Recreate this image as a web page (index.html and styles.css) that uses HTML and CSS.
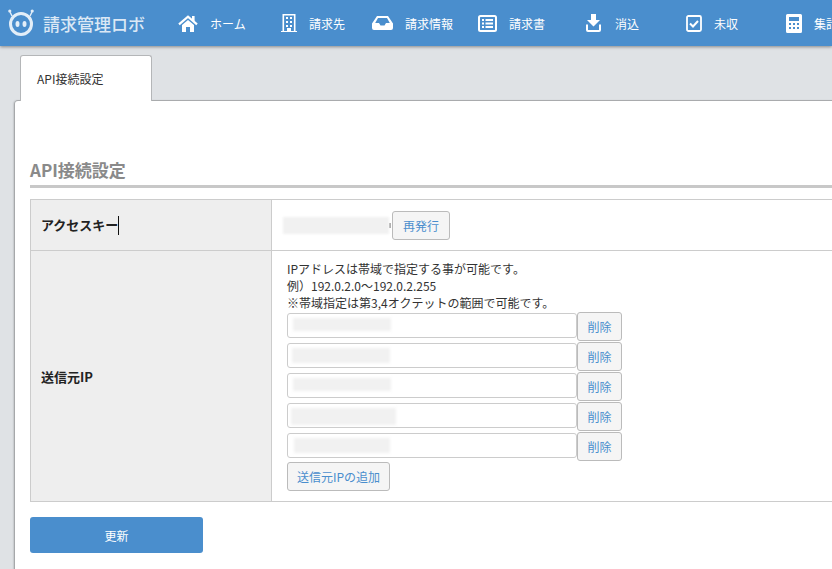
FILE: index.html
```html
<!DOCTYPE html>
<html lang="ja">
<head>
<meta charset="utf-8">
<title>API接続設定</title>
<link rel="stylesheet" href="styles.css">
</head>
<body>
<header class="header">
  <div class="logo">
    <svg class="logo-icon" viewBox="0 0 28 28" width="28" height="28">
      <circle cx="14" cy="16" r="10.5" fill="none" stroke="#e3eef8" stroke-width="3"/>
      <ellipse cx="10.5" cy="16" rx="2" ry="3" fill="#e3eef8"/>
      <ellipse cx="17.5" cy="16" rx="2" ry="3" fill="#e3eef8"/>
      <path d="M5 8 3 4M23 8l2-4" stroke="#e3eef8" stroke-width="1.4"/>
      <circle cx="2.8" cy="3" r="1.6" fill="#e3eef8"/>
      <circle cx="25.2" cy="3" r="1.6" fill="#e3eef8"/>
    </svg>
    <span class="logo-text">請求管理ロボ</span>
  </div>
  <nav class="nav">
    <a class="nav-item w-home">
      <svg class="icon" width="20" height="17" viewBox="0 0 20 17"><path d="M1 9.3 10 1.6l9 7.7" fill="none" stroke="#fff" stroke-width="2.2"/><path d="M14 1h2.6v5H14zM4 10l6-5 6 5v7h-4v-5H8v5H4z" fill="#fff"/></svg>
      <span class="nav-label">ホーム</span>
    </a>
    <a class="nav-item w-client">
      <svg class="icon" width="16" height="18" viewBox="0 0 16 18"><path d="M0 17h16v1H0zM1.5 0h13v17h-1.6V1.6H3.100V17H1.500z" fill="#fff"/><path d="M5 3h2v2H5zM9 3h2v2H9zM5 7h2v2H5zM9 7h2v2H9zM5 11h2v2H5zM9 11h2v2H9zM6 14h4v3H6z" fill="#fff"/></svg>
      <span class="nav-label">請求先</span>
    </a>
    <a class="nav-item w-info">
      <svg class="icon" width="21" height="14" viewBox="0 0 21 14"><path fill-rule="evenodd" d="M5 0h11l5 7.500V12a2 2 0 0 1-2 2H2a2 2 0 0 1-2-2V7.500zM6 2 3.200 7H7l1.500 2.500h4L14 7h3.800L15 2z" fill="#fff"/></svg>
      <span class="nav-label">請求情報</span>
    </a>
    <a class="nav-item w-invoice">
      <svg class="icon" width="19" height="17" viewBox="0 0 19 17"><rect x="1" y="1" width="17" height="15" rx="1.500" fill="none" stroke="#fff" stroke-width="2"/><path d="M4 4h2v2H4zM7.500 4H15v2H7.500zM4 7.500h2v2H4zM7.500 7.500H15v2H7.500zM4 11h2v2H4zM7.500 11H15v2H7.500z" fill="#fff"/></svg>
      <span class="nav-label">請求書</span>
    </a>
    <a class="nav-item w-clear">
      <svg class="icon" width="15" height="18" viewBox="0 0 15 18"><path d="M5 0h5v6h4l-6.500 6.500L1 6h4z" fill="#fff"/><path d="M1 10.500V16a1 1 0 0 0 1 1h11a1 1 0 0 0 1-1v-5.500" fill="none" stroke="#fff" stroke-width="2"/></svg>
      <span class="nav-label">消込</span>
    </a>
    <a class="nav-item w-unpaid">
      <svg class="icon" width="16" height="17" viewBox="0 0 16 17"><rect x="1" y="1" width="14" height="15" rx="1.500" fill="none" stroke="#fff" stroke-width="1.800"/><path d="m4 8.500 3 3 5-5.500" fill="none" stroke="#fff" stroke-width="2"/></svg>
      <span class="nav-label">未収</span>
    </a>
    <a class="nav-item w-total">
      <svg class="icon" width="16" height="19" viewBox="0 0 16 19"><path fill-rule="evenodd" d="M1.500 0h13A1.500 1.500 0 0 1 16 1.500v16a1.500 1.500 0 0 1-1.500 1.500h-13A1.500 1.500 0 0 1 0 17.500v-16A1.500 1.500 0 0 1 1.500 0zM3 3v4h10V3zM3 9v2h2V9zm4 0v2h2V9zm4 0v2h2V9zm-8 4v2h2v-2zm4 0v2h2v-2zm4 0v2h2v-2z" fill="#fff"/></svg>
      <span class="nav-label">集計</span>
    </a>
  </nav>
</header>

<div class="tabs">
  <div class="tab">API接続設定</div>
</div>

<main class="card">
  <h2 class="title">API接続設定</h2>
  <table class="form-table">
    <tr class="row-key">
      <th>アクセスキー<span class="caret"></span></th>
      <td>
        <div class="key-line">
          <span class="blur-key"></span>
          <span class="key-end"></span>
          <button class="btn" type="button">再発行</button>
        </div>
      </td>
    </tr>
    <tr>
      <th>送信元IP</th>
      <td class="ip-cell">
        <p class="note">IPアドレスは帯域で指定する事が可能です。</p>
        <p class="note">例）192.0.2.0～192.0.2.255</p>
        <p class="note">※帯域指定は第3,4オクテットの範囲で可能です。</p>
        <div class="ip-row">
          <div class="ip-input"><span class="blur b1"></span></div>
          <button class="btn btn-del" type="button">削除</button>
        </div>
        <div class="ip-row">
          <div class="ip-input"><span class="blur b2"></span></div>
          <button class="btn btn-del" type="button">削除</button>
        </div>
        <div class="ip-row">
          <div class="ip-input"><span class="blur b3"></span></div>
          <button class="btn btn-del" type="button">削除</button>
        </div>
        <div class="ip-row">
          <div class="ip-input"><span class="blur b4"></span></div>
          <button class="btn btn-del" type="button">削除</button>
        </div>
        <div class="ip-row">
          <div class="ip-input"><span class="blur b5"></span></div>
          <button class="btn btn-del" type="button">削除</button>
        </div>
        <button class="btn btn-add" type="button">送信元IPの追加</button>
      </td>
    </tr>
  </table>
  <button class="btn-primary" type="button">更新</button>
</main>
</body>
</html>
```

FILE: styles.css
```css
* { box-sizing: border-box; }

html, body {
  margin: 0;
  height: 569px;
  overflow: hidden;
}

body {
  width: 832px;
  background: #dfe2e5;
  color: #333;
  font-family: "Noto Sans CJK JP", "Noto Sans", sans-serif;
  font-size: 12px;
}

.header {
  display: flex;
  align-items: center;
  height: 46px;
  background: #4a8ecd;
  box-shadow: 0 1px 3px rgba(0, 0, 0, .4);
  overflow: hidden;
  position: relative;
}

.logo {
  display: flex;
  align-items: center;
  width: 178px;
  flex: none;
  padding-left: 7px;
}

.logo-icon { flex: none; margin-top: -3px; }

.logo-text {
  margin-left: 8px;
  color: #dbe8f5;
  font-size: 17px;
  font-weight: 500;
  letter-spacing: 0;
  white-space: nowrap;
}

.nav { display: flex; align-items: center; }

.nav-item {
  display: flex;
  align-items: center;
  flex: none;
  color: #fff;
}

.nav-label { white-space: nowrap; }

.w-home { width: 103px; }
.w-home .icon { margin-right: 12px; }
.w-client { width: 91px; }
.w-client .icon { margin-right: 12px; }
.w-info { width: 106px; }
.w-info .icon { margin-right: 12px; }
.w-invoice { width: 108px; }
.w-invoice .icon { margin-right: 12px; }
.w-clear { width: 100px; }
.w-clear .icon { margin-right: 14px; }
.w-unpaid { width: 100px; }
.w-unpaid .icon { margin-right: 12px; }
.w-total { width: 100px; }
.w-total .icon { margin-right: 12px; }

.icon { flex: none; display: block; }

.tabs {
  display: flex;
  padding: 9px 0 0 20px;
  height: 55px;
  position: relative;
  z-index: 1;
}

.tab {
  width: 132px;
  height: 46px;
  padding: 14px 0 0 16px;
  background: #fff;
  border: 1px solid #b4b6b8;
  border-bottom: 0;
  border-radius: 3px 3px 0 0;
  font-size: 12px;
  line-height: 18px;
}

.card {
  width: 1000px;
  height: 480px;
  margin-left: 15px;
  padding: 57px 0 0 15px;
  background: #fff;
  border-radius: 3px 0 0 0;
  box-shadow: 0 -1px 0 #a9abad, -1px 0 2px rgba(0, 0, 0, .35);
}

.title {
  margin: 0 0 11px;
  height: 30px;
  border-bottom: 3px solid #c8c8c8;
  color: #8a8a8a;
  font-size: 17px;
  font-weight: 700;
  line-height: 24px;
}

.form-table {
  width: 900px;
  table-layout: fixed;
  border-collapse: collapse;
}

.form-table th,
.form-table td {
  border: 1px solid #ccc;
  text-align: left;
}

.form-table th {
  width: 241px;
  padding: 0 10px;
  background: #eee;
  color: #222;
  font-size: 13px;
  font-weight: 700;
}

.form-table td { padding: 0 15px; }

.row-key { height: 51px; }
.row-key td { padding-left: 11px; }

.caret {
  display: inline-block;
  width: 1px;
  height: 19px;
  margin-left: 0;
  background: #111;
  vertical-align: middle;
}

.key-line { display: flex; align-items: center; }

.blur-key {
  display: block;
  width: 106px;
  height: 17px;
  background: #f1f1f1;
  filter: blur(1px);
}

.key-end {
  display: block;
  width: 2px;
  height: 5px;
  margin: 0 1px 0 0;
  background: #aaa;
}

.btn {
  height: 29px;
  padding: 0 10px;
  background: #f5f5f5;
  border: 1px solid #bbb;
  border-radius: 3px;
  color: #4a8ecd;
  font-family: inherit;
  font-size: 12px;
  white-space: nowrap;
}

.ip-cell.ip-cell { padding: 9px 15px 10px; }

.note {
  margin: 0;
  font-size: 12px;
  line-height: 17px;
}

.note + .ip-row { margin-top: 1px; }

.ip-row {
  display: flex;
  align-items: flex-start;
  height: 30px;
}

.ip-input {
  position: relative;
  width: 290px;
  height: 25px;
  margin-top: 1px;
  background: #fff;
  border: 1px solid #ccc;
  border-radius: 3px;
}

.blur {
  position: absolute;
  top: 4px;
  height: 13px;
  background: #f1f1f1;
  filter: blur(1.500px);
}

.b1 { left: 5px; width: 98px; }
.b2 { left: 4px; width: 98px; height: 15px; }
.b3 { left: 5px; width: 98px; }
.b4 { left: 3px; width: 105px; height: 17px; }
.b5 { left: 6px; width: 96px; height: 15px; }

.btn-del { width: 45px; padding: 0; flex: none; }

.btn-add { display: block; width: 103px; padding: 0; }

.btn-primary {
  display: block;
  width: 173px;
  height: 36px;
  margin-top: 15px;
  background: #4a8ecd;
  border: 0;
  border-radius: 3px;
  color: #fff;
  font-family: inherit;
  font-size: 12px;
}
```
